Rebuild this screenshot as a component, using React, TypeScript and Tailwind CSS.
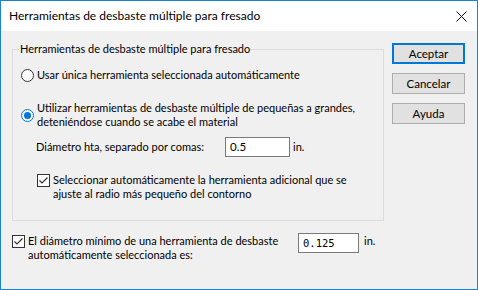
const font = { fontFamily: 'Lato, "Noto Sans", sans-serif' };

function Radio({ checked }: { checked?: boolean }) {
  return (
    <span
      className={
        "flex h-[13px] w-[13px] shrink-0 items-center justify-center rounded-full border bg-white " +
        (checked ? "border-[#0078d7]" : "border-[#333333]")
      }
    >
      {checked && <span className="h-[7px] w-[7px] rounded-full bg-[#0078d7]" />}
    </span>
  );
}

function Check() {
  return (
    <span className="flex h-[13px] w-[13px] shrink-0 items-center justify-center border border-[#333333] bg-white">
      <svg width="11" height="11" viewBox="0 0 11 11">
        <polyline points="1.5,5.5 4,8 9.5,2.5" fill="none" stroke="#333333" strokeWidth="1.2" />
      </svg>
    </span>
  );
}

function Btn({ label, primary }: { label: string; primary?: boolean }) {
  return (
    <button
      type="button"
      className={
        "h-[21px] w-[73px] bg-[#e1e1e1] text-[11.5px] leading-none text-black " +
        (primary ? "border-2 border-[#0078d7]" : "border border-[#adadad]")
      }
    >
      {label}
    </button>
  );
}

export default function App() {
  return (
    <div
      className="flex h-[290px] w-[478px] flex-col whitespace-nowrap border border-[#1883d7] bg-[#f0f0f0] text-black"
      style={font}
    >
      {/* Title bar */}
      <div className="flex h-[30px] shrink-0 items-center justify-between bg-white pl-[8px] pr-[10px]">
        <span className="text-[12px]">Herramientas de desbaste múltiple para fresado</span>
        <svg width="11" height="11" viewBox="0 0 11 11">
          <path d="M0.5 0.5 L10.5 10.5 M10.5 0.5 L0.5 10.5" stroke="#111" strokeWidth="1" />
        </svg>
      </div>

      <div className="flex flex-1 gap-[8px] pl-[11px] pr-[13px] text-[11px] leading-[14px]">
        <div className="flex flex-col pt-[11px]">
          <fieldset className="h-[179px] w-[372px] border border-[#dcdcdc]">
            <legend className="ml-[6px] px-[1px]">
              Herramientas de desbaste múltiple para fresado
            </legend>

            <div className="flex flex-col pl-[8px]">
              <div className="mt-[12px] flex items-center gap-[3px]">
                <Radio />
                <span>Usar única herramienta seleccionada automáticamente</span>
              </div>

              <div className="mt-[19px] flex items-center gap-[3px]">
                <Radio checked />
                <span>
                  Utilizar herramientas de desbaste múltiple de pequeñas a grandes,
                  <br />
                  deteniéndose cuando se acabe el material
                </span>
              </div>

              <div className="mt-[8px] flex items-center pl-[15px]">
                <span className="w-[189px]">Diámetro hta, separado por comas:</span>
                <span className="flex h-[20px] w-[65px] items-center border border-[#7a7a7a] bg-white pl-[4px] text-[11.5px]">
                  0.5
                </span>
                <span className="ml-[3px]">in.</span>
              </div>

              <div className="mt-[16px] flex items-start gap-[3px] pl-[16px]">
                <span className="mt-[1px]">
                  <Check />
                </span>
                <span>
                  Seleccionar automáticamente la herramienta adicional que se
                  <br />
                  ajuste al radio más pequeño del contorno
                </span>
              </div>
            </div>
          </fieldset>

          <div className="mt-[13px] flex items-start">
            <span className="mt-[1px]">
              <Check />
            </span>
            <span className="ml-[3px] w-[270px]">
              El diámetro mínimo de una herramienta de desbaste
              <br />
              automáticamente seleccionada es:
            </span>
            <span
              className="-mt-[1px] flex h-[20px] w-[61px] items-center border border-[#7a7a7a] bg-white pl-[4px] text-[10.5px]"
              style={{ fontFamily: '"DejaVu Sans Mono", monospace' }}
            >
              0.125
            </span>
            <span className="ml-[5px]">in.</span>
          </div>
        </div>

        <div className="flex flex-col gap-[9px] pt-[12px]">
          <Btn label="Aceptar" primary />
          <Btn label="Cancelar" />
          <Btn label="Ayuda" />
        </div>
      </div>
    </div>
  );
}
